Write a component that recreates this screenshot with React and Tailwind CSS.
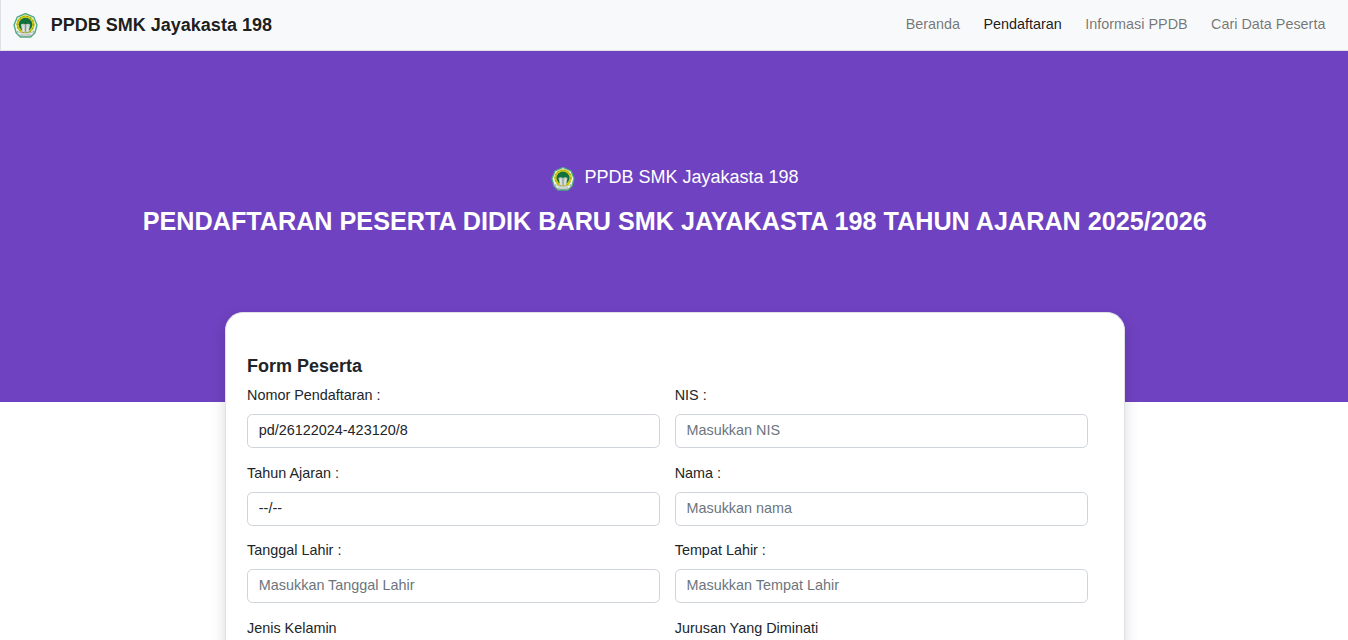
function Logo({ className }) {
  return (
    <svg viewBox="0 0 48 48" className={className} aria-hidden="true">
      <polygon points="24,1 40,8 46,23 42,38 34,46 14,46 6,38 2,23 8,8" fill="#eef7f1" stroke="#4fa984" strokeWidth="2.6" strokeLinejoin="round" />
      <circle cx="24" cy="22" r="17.500" fill="#d6cc14" />
      <circle cx="24" cy="22" r="16" fill="none" stroke="#8f9a20" strokeWidth="2" strokeDasharray="3 4" />
      <circle cx="24" cy="22" r="13" fill="#12703f" />
      <path d="M15 22c3-2 6-2 9 0c3-2 6-2 9 0l-3 15h-12z" fill="#c3cbc7" />
      <path d="M24 22v14" stroke="#7d8983" strokeWidth="1.500" fill="none" />
      <path d="M19 24l1.500 12M29 24l-1.500 12" stroke="#e3e8e5" strokeWidth="2.500" fill="none" />
      <path d="M8 35c5 3.500 10 3.500 16 3.500s11 0 16-3.500l-1 5c-5 4-9 4-15 4s-10 0-15-4z" fill="#f5f6f4" stroke="#6f8378" strokeWidth="1" />
      <path d="M14 41c6 1 14 1 20 0" stroke="#b0b6b3" strokeWidth="1.500" fill="none" />
    </svg>
  );
}

const links = ['Beranda', 'Pendaftaran', 'Informasi PPDB', 'Cari Data Peserta'];

const fields = [
  { label: 'Nomor Pendaftaran :', value: 'pd/26122024-423120/8' },
  { label: 'NIS :', placeholder: 'Masukkan NIS' },
  { label: 'Tahun Ajaran :', value: '--/--' },
  { label: 'Nama :', placeholder: 'Masukkan nama' },
  { label: 'Tanggal Lahir :', placeholder: 'Masukkan Tanggal Lahir' },
  { label: 'Tempat Lahir :', placeholder: 'Masukkan Tempat Lahir' },
  { label: 'Jenis Kelamin', placeholder: '' },
  { label: 'Jurusan Yang Diminati', placeholder: '' },
];

function Field({ label, value, placeholder }) {
  return (
    <label className="mb-[14.4px] block">
      <span className="mb-[7.5px] block leading-[21.6px]">{label}</span>
      <input
        defaultValue={value}
        placeholder={placeholder}
        className="block h-[34.1px] w-full rounded-[5.4px] border border-[#ced4da] bg-white px-[10.8px] pb-0.5 text-[#212529] outline-none placeholder:text-[#6c757d]"
      />
    </label>
  );
}

export default function App() {
  return (
    <div className="h-[640px] overflow-hidden bg-white font-['Liberation_Sans',Arial,sans-serif] text-[14.4px] text-[#212529]">
      <nav className="flex h-[51px] items-center justify-between border-b border-l border-[#dee2e6] bg-[#f8f9fa] pr-[22.6px] pl-3">
        <a className="flex items-center text-[18px] font-bold text-black/90">
          <Logo className="mt-px mr-[12.8px] size-[25px]" />
          PPDB SMK Jayakasta 198
        </a>
        <div className="flex gap-[23.4px]">
          {links.map((link) => (
            <a key={link} className={link === 'Pendaftaran' ? 'text-black/90' : 'text-black/55'}>
              {link}
            </a>
          ))}
        </div>
      </nav>
      <header className="flex h-[351px] flex-col items-center bg-[#6f42c1] pt-[115px] pl-[1.6px] text-white">
        <div className="flex h-[27px] items-start text-[18px] leading-[22px]">
          <Logo className="mt-px mr-[9.4px] size-6" />
          PPDB SMK Jayakasta 198
        </div>
        <h1 className="mt-[13px] text-[25.2px] leading-[31px] font-bold whitespace-nowrap">
          PENDAFTARAN PESERTA DIDIK BARU SMK JAYAKASTA 198 TAHUN AJARAN 2025/2026
        </h1>
      </header>
      <main className="relative mx-auto -mt-[90px] ml-[225px] h-[700px] w-[900px] rounded-[18px] border border-[#dee2e6] bg-white pt-[43.35px] pr-9 pl-[21px] shadow-[0_7.2px_14.4px_rgba(0,0,0,0.15)]">
        <h2 className="mb-[7.2px] text-[18px] leading-[21.6px] font-bold">Form Peserta</h2>
        <div className="grid grid-cols-2 gap-x-[14.4px]">
          {fields.map((field) => (
            <Field key={field.label} {...field} />
          ))}
        </div>
      </main>
    </div>
  );
}
